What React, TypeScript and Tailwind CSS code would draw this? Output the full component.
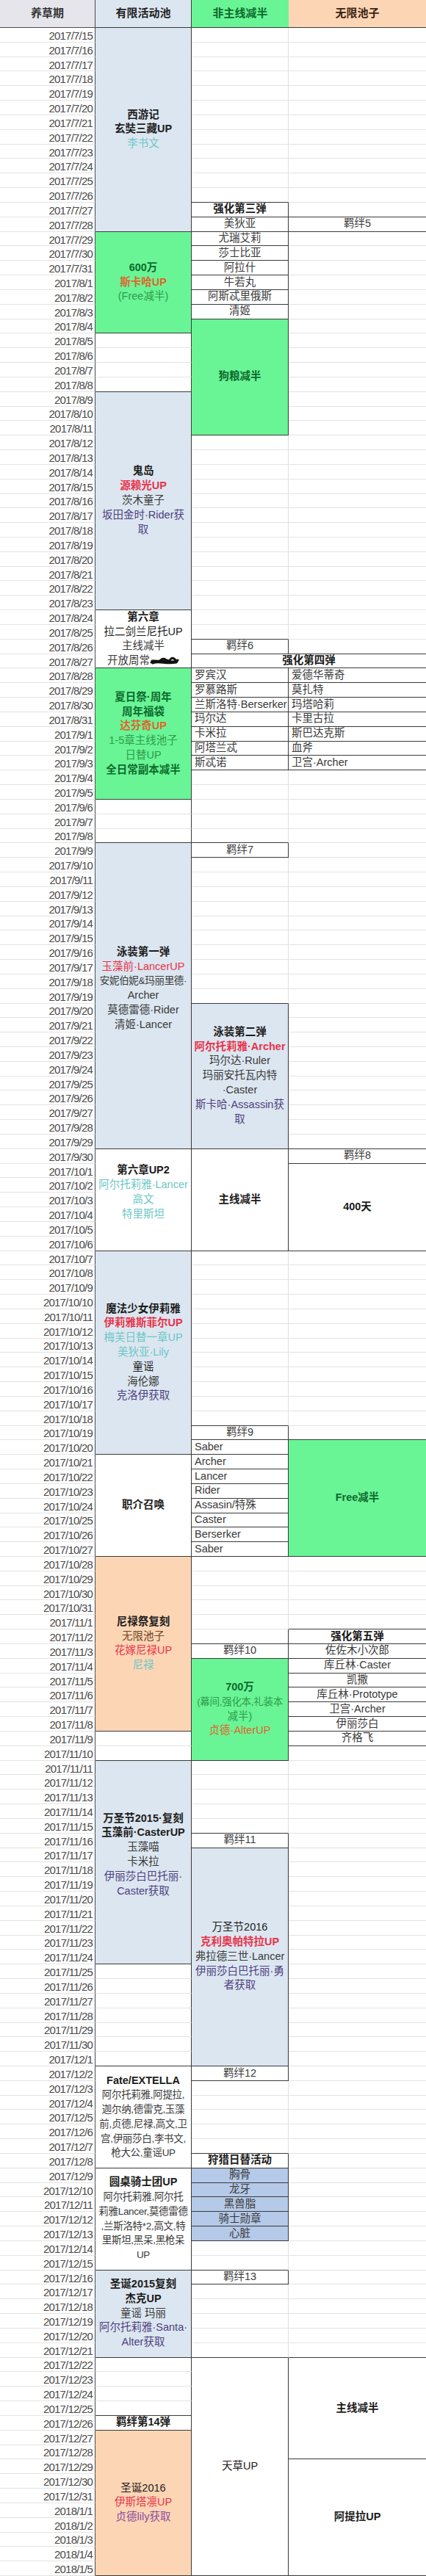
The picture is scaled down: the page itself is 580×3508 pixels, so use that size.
import React from 'react';

type Line = { t: React.ReactNode; c?: string; b?: boolean; sm?: boolean };

type Block = {
  col: number;
  wide?: boolean;
  from: string;
  rows?: number;
  bg?: string;
  left?: boolean;
  lines: Line[];
};

const DAYS = 175;

const dates = Array.from({ length: DAYS }, (_, i) => {
  const d = new Date(Date.UTC(2017, 6, 15 + i));
  return `${d.getUTCFullYear()}/${d.getUTCMonth() + 1}/${d.getUTCDate()}`;
});

const at = (s: string) => dates.indexOf(s.startsWith('2018') ? s : `2017/${s}`);

// text colours
const INK = 'text-[#1c1c1c]';
const GRAY = 'text-[#3a3a3a]';
const RED = 'text-[#e8334a]';
const ORANGE = 'text-[#e0642c]';
const DGREEN = 'text-[#0d6a2c]';
const LGREEN = 'text-[#2f9c4c]';
const TEAL = 'text-[#6cc6c6]';
const PURPLE = 'text-[#4e3f80]';
const VIOLET = 'text-[#8a4c9c]';
const BROWN = 'text-[#6b4726]';

// cell fills
const BLUE = 'bg-[#dce6f0]';
const GREEN = 'bg-[#69f596]';
const PEACH = 'bg-[#fcd5b5]';
const HUNT = 'bg-[#b5c9e8]';

const B = (t: React.ReactNode, c = INK): Line => ({ t, c, b: true });
const N = (t: React.ReactNode, c = GRAY): Line => ({ t, c });
const S = (t: React.ReactNode, c = GRAY): Line => ({ t, c, sm: true });
const GAP: Line = { t: '' };

function Scribble() {
  return (
    <svg width="40" height="14" viewBox="0 0 40 14" className="inline-block align-middle">
      <path
        d="M2 9 C6 3 10 12 15 6 S24 11 28 5 S36 10 38 6 M3 7 L37 8 M4 10 C12 6 22 12 36 9"
        fill="none"
        stroke="#111"
        strokeWidth="3"
        strokeLinecap="round"
      />
    </svg>
  );
}

const one = (col: number, from: string, t: string, bold = false, bg?: string): Block => ({
  col,
  from,
  bg,
  lines: [bold ? B(t) : N(t)],
});

const list = (col: number, from: string, names: string[], left = false, bg?: string): Block[] => {
  const start = at(from);
  return names.map((t) => ({ col, from: dates[0], bg, left, lines: [N(t)], _i: 0 } as Block)).map((b, i) => ({
    ...b,
    from: dates[start + i].replace('2017/', ''),
  }));
};

const blocks: Block[] = [
  // 有限活动池
  { col: 2, from: '7/15', rows: 14, bg: BLUE, lines: [B('西游记'), B('玄奘三藏UP'), N('李书文', TEAL)] },
  { col: 2, from: '7/29', rows: 7, bg: GREEN, lines: [B('600万', DGREEN), B('斯卡哈UP', ORANGE), N('(Free减半)', LGREEN)] },
  {
    col: 2,
    from: '8/9',
    rows: 15,
    bg: BLUE,
    lines: [B('鬼岛'), B('源赖光UP', RED), N('茨木童子'), N('坂田金时·Rider获', PURPLE), N('取', PURPLE)],
  },
  {
    col: 2,
    from: '8/24',
    rows: 4,
    lines: [B('第六章'), N('拉二剑兰尼托UP', INK), N('主线减半'), N(<>开放周常<Scribble /></>)],
  },
  {
    col: 2,
    from: '8/28',
    rows: 9,
    bg: GREEN,
    lines: [
      B('夏日祭·周年', DGREEN),
      B('周年福袋', DGREEN),
      B('达芬奇UP', ORANGE),
      N('1-5章主线池子', LGREEN),
      N('日替UP', LGREEN),
      B('全日常副本减半', DGREEN),
    ],
  },
  {
    col: 2,
    from: '9/9',
    rows: 21,
    bg: BLUE,
    lines: [
      B('泳装第一弹'),
      N('玉藻前·LancerUP', RED),
      S('安妮伯妮&玛丽里德·'),
      N('Archer'),
      N('莫德雷德·Rider'),
      N('清姬·Lancer'),
      GAP,
    ],
  },
  {
    col: 2,
    from: '9/30',
    rows: 7,
    lines: [B('第六章UP2'), N('阿尔托莉雅·Lancer', TEAL), N('高文', TEAL), N('特里斯坦', TEAL), GAP],
  },
  {
    col: 2,
    from: '10/7',
    rows: 14,
    bg: BLUE,
    lines: [
      B('魔法少女伊莉雅'),
      B('伊莉雅斯菲尔UP', RED),
      N('梅芙日替一章UP', TEAL),
      N('美狄亚·Lily', TEAL),
      N('童谣', INK),
      N('海伦娜'),
      N('克洛伊获取', PURPLE),
    ],
  },
  { col: 2, from: '10/21', rows: 7, lines: [B('职介召唤')] },
  {
    col: 2,
    from: '10/28',
    rows: 12,
    bg: PEACH,
    lines: [B('尼禄祭复刻'), N('无限池子', BROWN), N('花嫁尼禄UP', RED), N('尼禄', TEAL)],
  },
  {
    col: 2,
    from: '11/11',
    rows: 14,
    bg: BLUE,
    lines: [
      B('万圣节2015·复刻'),
      B('玉藻前·CasterUP'),
      N('玉藻喵'),
      N('卡米拉'),
      N('伊丽莎白巴托丽·', PURPLE),
      N('Caster获取', PURPLE),
      GAP,
    ],
  },
  {
    col: 2,
    from: '12/2',
    rows: 7,
    lines: [
      B('Fate/EXTELLA'),
      S('阿尔托莉雅,阿提拉,'),
      S('迦尔纳,德雷克,玉藻'),
      S('前,贞德,尼禄,高文,卫'),
      S('宫,伊丽莎白,李书文,'),
      S('枪大公,童谣UP'),
    ],
  },
  {
    col: 2,
    from: '12/9',
    rows: 7,
    lines: [
      B('圆桌骑士团UP'),
      S('阿尔托莉雅,阿尔托'),
      S('莉雅Lancer,莫德雷德'),
      S(',兰斯洛特*2,高文,特'),
      S('里斯坦,黑呆,黑枪呆'),
      S('UP'),
    ],
  },
  {
    col: 2,
    from: '12/16',
    rows: 6,
    bg: BLUE,
    lines: [B('圣诞2015复刻'), B('杰克UP'), N('童谣 玛丽'), N('阿尔托莉雅·Santa·', PURPLE), N('Alter获取', PURPLE)],
  },
  one(2, '12/26', '羁绊第14弹', true),
  {
    col: 2,
    from: '12/27',
    rows: 10,
    bg: PEACH,
    lines: [N('圣诞2016', INK), N('伊斯塔凛UP', RED), N('贞德lily获取', VIOLET)],
  },

  // 非主线减半
  one(3, '7/27', '强化第三弹', true),
  ...list(3, '7/28', ['美狄亚', '尤瑞艾莉', '莎士比亚', '阿拉什', '牛若丸', '阿斯忒里俄斯', '清姬']),
  { col: 3, from: '8/4', rows: 8, bg: GREEN, lines: [B('狗粮减半', DGREEN)] },
  one(3, '8/26', '羁绊6'),
  { col: 3, wide: true, from: '8/27', lines: [B('强化第四弹')] },
  ...list(3, '8/28', ['罗宾汉', '罗慕路斯', '兰斯洛特·Berserker', '玛尔达', '卡米拉', '阿塔兰忒', '斯忒诺'], true),
  one(3, '9/9', '羁绊7'),
  {
    col: 3,
    from: '9/20',
    rows: 10,
    bg: BLUE,
    lines: [
      B('泳装第二弹'),
      B('阿尔托莉雅·Archer', RED),
      N('玛尔达·Ruler'),
      N('玛丽安托瓦内特'),
      N('·Caster'),
      N('斯卡哈·Assassin获', PURPLE),
      N('取', PURPLE),
    ],
  },
  { col: 3, from: '9/30', rows: 7, lines: [B('主线减半')] },
  one(3, '10/19', '羁绊9'),
  ...list(3, '10/20', ['Saber', 'Archer', 'Lancer', 'Rider', 'Assasin/特殊', 'Caster', 'Berserker', 'Saber'], true),
  one(3, '11/3', '羁绊10'),
  {
    col: 3,
    from: '11/4',
    rows: 7,
    bg: GREEN,
    lines: [B('700万', DGREEN), S('(幕间,强化本,礼装本', LGREEN), N('减半)', LGREEN), N('贞德·AlterUP', ORANGE)],
  },
  one(3, '11/16', '羁绊11'),
  {
    col: 3,
    from: '11/17',
    rows: 15,
    bg: BLUE,
    lines: [
      N('万圣节2016', INK),
      B('克利奥帕特拉UP', RED),
      N('弗拉德三世·Lancer'),
      N('伊丽莎白巴托丽·勇', PURPLE),
      N('者获取', PURPLE),
    ],
  },
  one(3, '12/2', '羁绊12'),
  one(3, '12/8', '狩猎日替活动', true),
  ...list(3, '12/9', ['胸骨', '龙牙', '黑兽脂', '骑士勋章', '心脏'], false, HUNT),
  one(3, '12/16', '羁绊13'),
  { col: 3, from: '12/22', rows: 15, lines: [N('天草UP', INK)] },

  // 无限池子
  one(4, '7/28', '羁绊5'),
  ...list(4, '8/28', ['爱德华蒂奇', '莫扎特', '玛塔哈莉', '卡里古拉', '斯巴达克斯', '血斧', '卫宫·Archer'], true),
  one(4, '9/30', '羁绊8'),
  { col: 4, from: '10/1', rows: 6, lines: [B('400天')] },
  { col: 4, from: '10/20', rows: 8, bg: GREEN, lines: [B('Free减半', DGREEN)] },
  one(4, '11/2', '强化第五弹', true),
  ...list(4, '11/3', ['佐佐木小次郎', '库丘林·Caster', '凯撒', '库丘林·Prototype', '卫宫·Archer', '伊丽莎白', '齐格飞']),
  { col: 4, from: '12/22', rows: 7, lines: [B('主线减半')] },
  { col: 4, from: '12/29', rows: 8, lines: [B('阿提拉UP')] },
];

// which block covers a given column / row
const occ: Record<number, (Block | undefined)[]> = { 2: [], 3: [], 4: [] };
blocks.forEach((k) => {
  const start = at(k.from);
  const cols = k.wide ? [3, 4] : [k.col];
  for (let r = start; r < start + (k.rows ?? 1); r++) cols.forEach((c) => (occ[c][r] = k));
});

function BlockCell({ k }: { k: Block }) {
  const edge = k.col === 4 || k.wide ? 'border-b' : 'border-b border-r';
  const place = k.left ? 'items-start justify-center pl-[4px]' : 'items-center justify-center text-center';
  return (
    <div
      style={{ gridRow: `${at(k.from) + 2} / span ${k.rows ?? 1}`, gridColumn: k.wide ? '3 / span 2' : `${k.col}` }}
      className={`${edge} border-[#3a3a3a] ${k.bg ?? 'bg-white'} flex flex-col overflow-hidden ${place}`}
    >
      {k.lines.map((l, i) => (
        <div
          key={i}
          className={`whitespace-nowrap leading-[19.8px] ${l.sm ? 'text-[13.5px] tracking-[-0.3px]' : 'text-[14.5px]'} ${
            l.b ? 'font-bold' : 'font-normal'
          } ${l.c ?? GRAY}`}
        >
          {l.t || '\u00a0'}
        </div>
      ))}
    </div>
  );
}

function EmptyCell({ col, row }: { col: number; row: number }) {
  let right = '';
  if (col === 2) right = 'border-r border-r-[#3a3a3a]';
  else if (col === 3) right = occ[4][row] ? 'border-r border-r-[#3a3a3a]' : 'border-r border-r-[#e0e0e0]';
  const bottom = occ[col][row + 1] ? 'border-b border-b-[#3a3a3a]' : 'border-b border-b-[#e3e3e3]';
  return <div style={{ gridRow: row + 2, gridColumn: col }} className={`bg-white ${right} ${bottom}`} />;
}

export default function App() {
  return (
    <div className="grid h-[3508px] w-[580px] grid-cols-[130px_131px_132px_187px] grid-rows-[38px_repeat(175,minmax(0,1fr))] overflow-hidden bg-white font-['Liberation_Sans','Noto_Sans_CJK_SC',sans-serif]">
      <div className="flex items-center justify-center border-b border-r border-[#4a4a4a] bg-[#e5e5eb] text-[15px] font-bold text-[#333]">
        养草期
      </div>
      <div className="flex items-center justify-center border-b border-r border-[#3a3a3a] bg-[#dce6f0] text-[15px] font-bold text-[#222]">
        有限活动池
      </div>
      <div className="flex items-center justify-center border-b border-[#3a3a3a] bg-[#69f596] text-[15px] font-bold text-[#0d6a2c]">
        非主线减半
      </div>
      <div className="flex items-center justify-center border-b border-[#3a3a3a] bg-[#fcd5b5] text-[15px] font-bold text-[#3a2410]">
        无限池子
      </div>

      {dates.map((d, i) => (
        <div
          key={d}
          style={{ gridRow: i + 2, gridColumn: 1 }}
          className="flex items-center justify-end border-b border-r border-b-[#e3e3e3] border-r-[#4a4a4a] pr-[3px] pt-[2px] text-[15px] leading-none tracking-[-0.8px] text-[#4a4a4a]"
        >
          {d}
        </div>
      ))}

      {[2, 3, 4].map((c) =>
        dates.map((d, r) => (occ[c][r] ? null : <EmptyCell key={`${c}-${d}`} col={c} row={r} />))
      )}

      {blocks.map((k, i) => (
        <BlockCell key={i} k={k} />
      ))}
    </div>
  );
}
